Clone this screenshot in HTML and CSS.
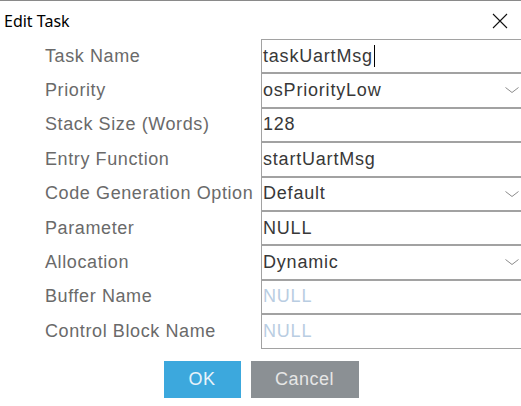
FILE: index.html
```html
<!DOCTYPE html>
<html>
<head>
<meta charset="utf-8">
<link rel="stylesheet" href="styles.css">
</head>
<body>
<div class="dialog">
  <div class="titlebar">
    <span class="title">Edit Task</span>
    <svg class="close" width="16" height="16" viewBox="0 0 16 16"><path d="M1 1 L15 15 M15 1 L1 15" stroke="#111" stroke-width="1.1" fill="none"/></svg>
  </div>
  <div class="form">
    <div class="label">Task Name</div>
    <div class="field"><span class="val">taskUartMsg</span><span class="caret"></span></div>
    <div class="label">Priority</div>
    <div class="field combo"><span class="val">osPriorityLow</span><svg class="chev" width="16" height="8" viewBox="0 0 16 8"><path d="M1.5 1.5 L8 6.5 L14.5 1.5" stroke="#8c8c8c" stroke-width="1" fill="none"/></svg></div>
    <div class="label">Stack Size (Words)</div>
    <div class="field"><span class="val">128</span></div>
    <div class="label">Entry Function</div>
    <div class="field"><span class="val">startUartMsg</span></div>
    <div class="label">Code Generation Option</div>
    <div class="field combo"><span class="val">Default</span><svg class="chev" width="16" height="8" viewBox="0 0 16 8"><path d="M1.5 1.5 L8 6.5 L14.5 1.5" stroke="#8c8c8c" stroke-width="1" fill="none"/></svg></div>
    <div class="label">Parameter</div>
    <div class="field"><span class="val">NULL</span></div>
    <div class="label">Allocation</div>
    <div class="field combo"><span class="val">Dynamic</span><svg class="chev" width="16" height="8" viewBox="0 0 16 8"><path d="M1.5 1.5 L8 6.5 L14.5 1.5" stroke="#8c8c8c" stroke-width="1" fill="none"/></svg></div>
    <div class="label">Buffer Name</div>
    <div class="field"><span class="val hint">NULL</span></div>
    <div class="label">Control Block Name</div>
    <div class="field"><span class="val hint">NULL</span></div>
  </div>
  <div class="buttons">
    <button class="btn ok">OK</button>
    <button class="btn cancel">Cancel</button>
  </div>
</div>
</body>
</html>
```
FILE: styles.css
```css
html, body {
  margin: 0;
  padding: 0;
  background: #ffffff;
  overflow: hidden;
}
.dialog {
  width: 521px;
  height: 406px;
  border-top: 1px solid #8a8a8a;
  box-sizing: border-box;
  overflow: hidden;
  font-family: "Liberation Sans", Arial, sans-serif;
}
.titlebar {
  height: 38px;
  display: flex;
  align-items: center;
  justify-content: space-between;
  padding: 0 13px 0 4px;
  box-sizing: border-box;
}
.title {
  font-family: "Noto Sans", "Open Sans", sans-serif;
  font-size: 16px;
  color: #000;
  margin-top: 1px;
}
.close {
  margin-top: 2px;
}
.form {
  display: grid;
  grid-template-columns: 216px 270px;
  grid-auto-rows: 34.4px;
  padding-left: 45px;
}
.label {
  font-size: 18px;
  letter-spacing: 0.6px;
  color: #6a6a6a;
  display: flex;
  align-items: center;
  white-space: nowrap;
}
.field {
  border: 1px solid #a2a2a2;
  box-sizing: border-box;
  display: flex;
  align-items: center;
  position: relative;
  font-size: 18px;
  letter-spacing: 0.8px;
  color: #383838;
  padding-left: 1px;
}
.val {
  white-space: nowrap;
}
.hint {
  color: #b9cde2;
}
.caret {
  display: inline-block;
  width: 1px;
  height: 22px;
  background: #000;
  margin-left: 1px;
}
.chev {
  position: absolute;
  left: 242px;
  top: 12px;
}
.buttons {
  display: flex;
  justify-content: center;
  gap: 10px;
  margin-top: 12px;
  padding-left: 1px;
}
.btn {
  height: 37px;
  border: none;
  font-family: "Liberation Sans", Arial, sans-serif;
  font-size: 18px;
  letter-spacing: 0.5px;
  color: #e8f3fa;
  padding: 0;
}
.ok {
  width: 77px;
  background: #3ca8dd;
}
.cancel {
  width: 108px;
  background: #8b9094;
  color: #e6e6e6;
}
```
